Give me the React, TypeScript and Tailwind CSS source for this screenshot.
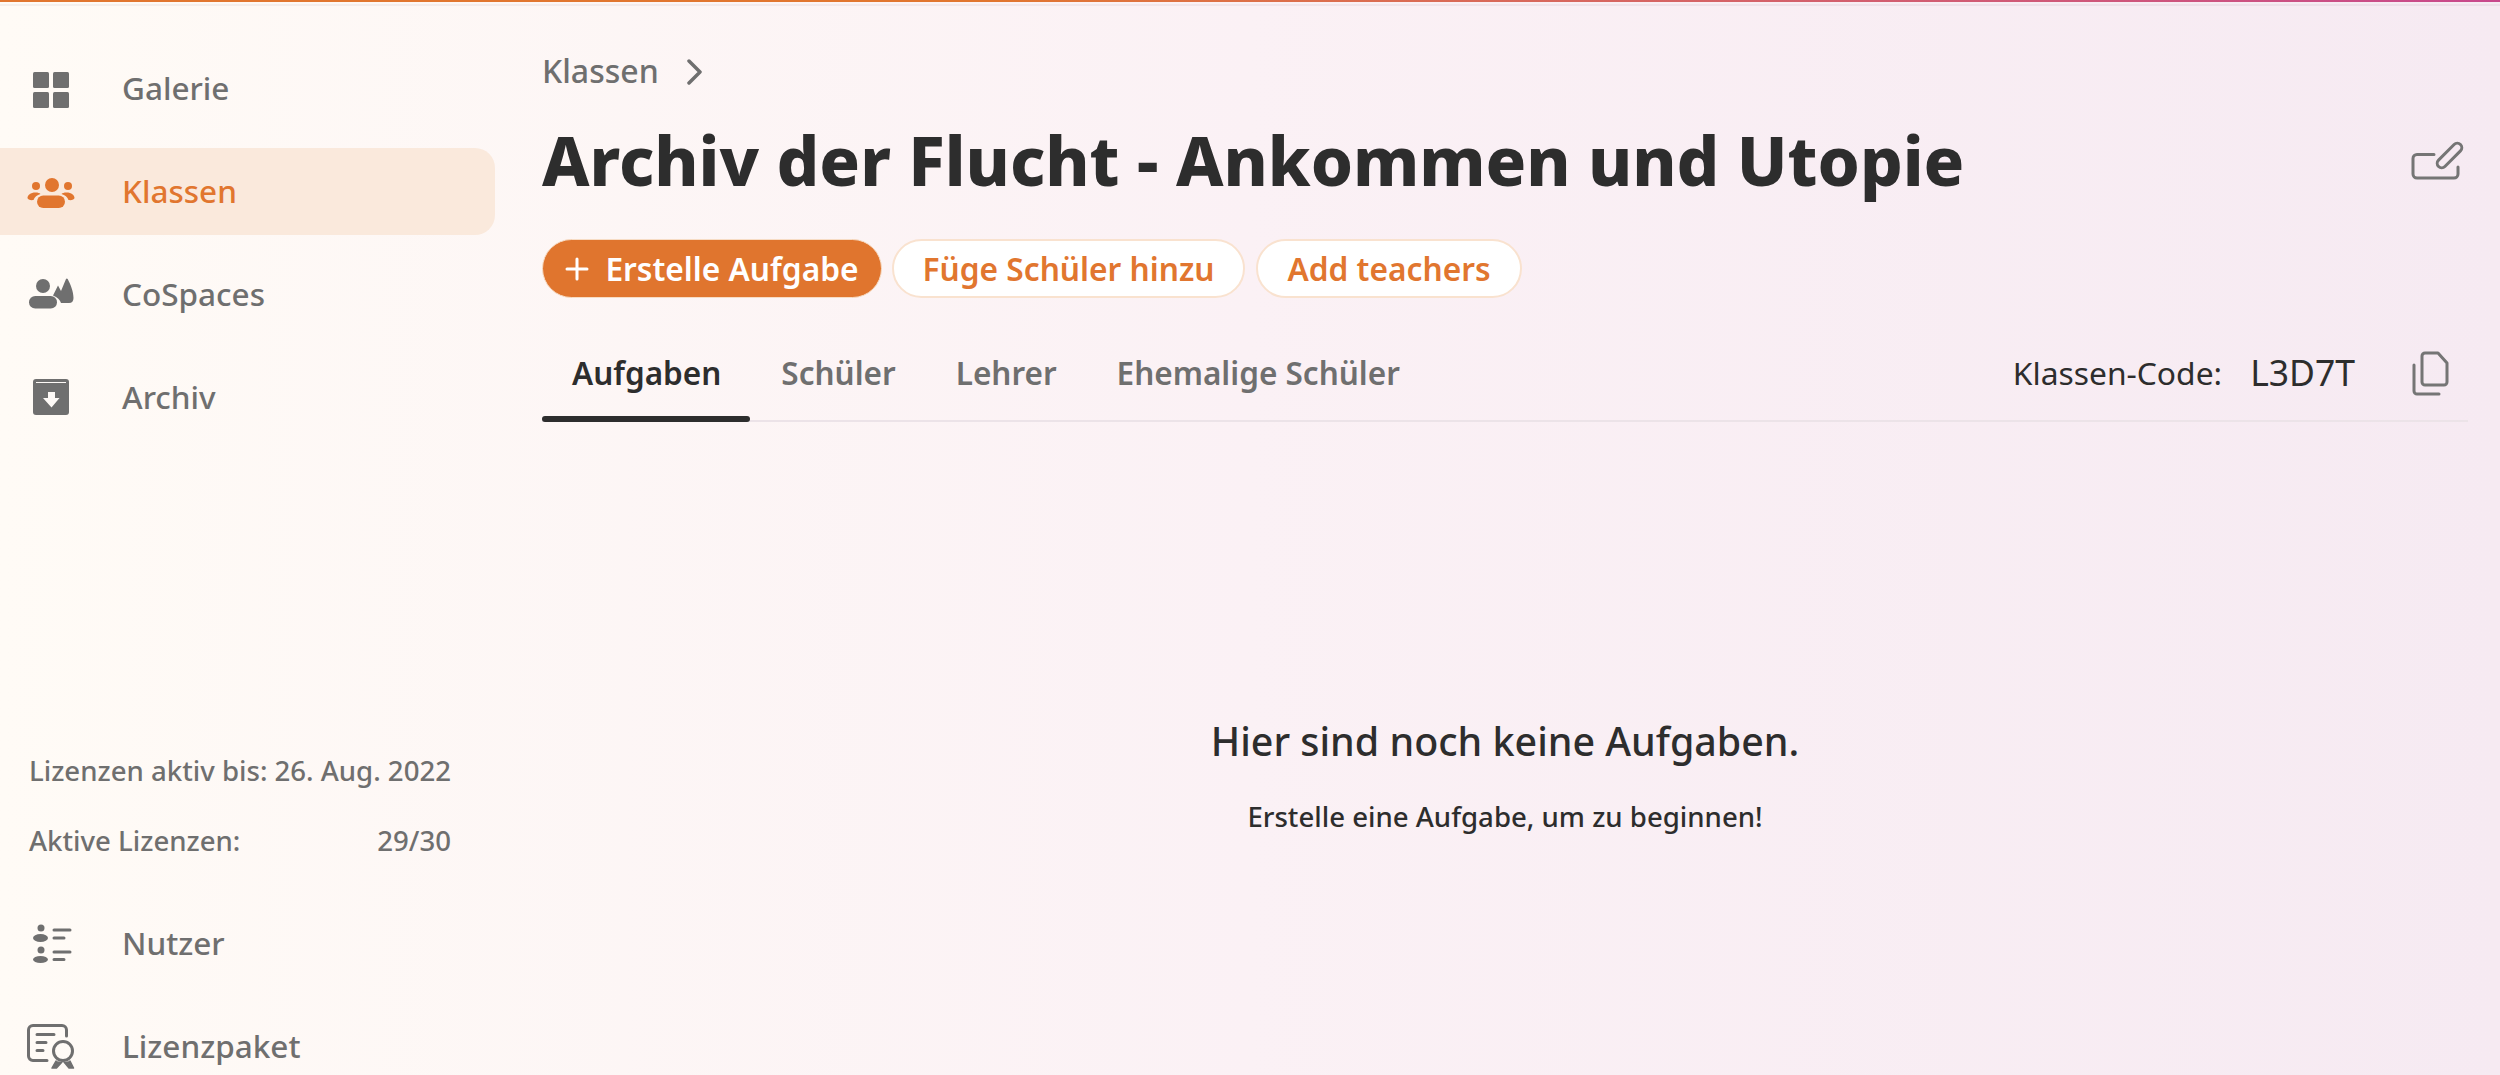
import React from "react";

const Grid = () => (
  <svg viewBox="0 0 48 48" className="w-12 h-12" fill="currentColor">
    <rect x="6" y="7" width="16" height="16" rx="1.5" />
    <rect x="26" y="7" width="16" height="16" rx="1.5" />
    <rect x="6" y="27" width="16" height="16" rx="1.5" />
    <rect x="26" y="27" width="16" height="16" rx="1.5" />
  </svg>
);
const Group = () => (
  <svg viewBox="0 0 48 48" className="w-12 h-12" fill="currentColor">
    <circle cx="25" cy="17" r="7" />
    <circle cx="9" cy="18" r="4" />
    <circle cx="41" cy="18" r="4" />
    <rect x="10" y="27.5" width="28" height="12.5" rx="6.25" />
    <path d="M0.5 30c0-3 3-5.500 8-5.500 2.500 0 4 .5 5 1.500-3.500 1-6 3-7 6-3 .5-6-.5-6-2z" />
    <path d="M47.500 30c0-3-3-5.500-8-5.500-2.500 0-4 .5-5 1.500 3.500 1 6 3 7 6 3 .5 6-.5 6-2z" />
  </svg>
);
const CoSpaces = () => (
  <svg viewBox="0 0 48 48" className="w-12 h-12" fill="currentColor">
    <circle cx="16" cy="15" r="7" />
    <rect x="2" y="25" width="28" height="12.500" rx="6.250" />
    <path d="M26 24.500l5-10 3 5.500L39 8c.5-.8 1.200-.8 1.700 0 2.500 5 5.800 12 5.800 19 0 3-1.500 5-4.500 5h-8c-1-3-3.500-6-8-7.500z" />
  </svg>
);
const Archive = () => (
  <svg viewBox="0 0 48 48" className="w-12 h-12">
    <rect x="6" y="5" width="36" height="36" rx="3" fill="currentColor" />
    <path d="M9 8.500h30" stroke="#fdf9f6" strokeWidth="1" />
    <path d="M21 18h7v6h4.500L24.500 33.500 16 24h5z" fill="#fdf9f6" />
  </svg>
);
const Users = () => (
  <svg viewBox="0 0 48 48" className="w-12 h-12" fill="currentColor">
    <circle cx="14" cy="8" r="3.500" />
    <ellipse cx="13.500" cy="18" rx="7.500" ry="4" />
    <circle cx="14" cy="30" r="3.500" />
    <ellipse cx="13.500" cy="39.500" rx="7.500" ry="3.500" />
    <g stroke="currentColor" strokeWidth="3" strokeLinecap="round">
      <path d="M27 10h16M27 18h10M27 32h16M27 39.500h10" />
    </g>
  </svg>
);
const License = () => (
  <svg viewBox="0 0 48 48" className="w-12 h-12" fill="none" stroke="currentColor" strokeWidth="3" strokeLinecap="round" strokeLinejoin="round">
    <path d="M20 37.500H6a4.500 4.500 0 0 1-4.500-4.500V7A4.500 4.500 0 0 1 6 2.500h29A4.500 4.500 0 0 1 39.500 7v6" />
    <path d="M10 11.500h17M10 19.500h9M10 27.500h6" />
    <circle cx="36" cy="28" r="9.500" />
    <path d="M29 38l-4 7h4.500l5.500-6M43 38l3.500 7H42l-5-6" fill="currentColor" strokeWidth="1.500" />
  </svg>
);

const NavItem = ({ icon, label, active, className = "" }: { icon: React.ReactNode; label: string; active?: boolean; className?: string }) => (
  <div
    className={`flex h-[87px] w-[495px] shrink-0 items-center gap-[47px] rounded-r-[20px] pl-[27px] text-[31.5px] font-medium ${
      active ? "bg-[#fae9dc] text-[#e1762f]" : "text-[#6f6f6f]"
    } ${className}`}
  >
    {icon}
    <span className="pb-[2px]">{label}</span>
  </div>
);

const Sidebar = () => (
  <aside className="flex w-[542px] shrink-0 flex-col pt-[43px]">
    <NavItem icon={<Grid />} label="Galerie" className="mb-4" />
    <NavItem icon={<Group />} label="Klassen" active className="mb-4" />
    <NavItem icon={<CoSpaces />} label="CoSpaces" className="mb-4" />
    <NavItem icon={<Archive />} label="Archiv" />
    <div className="mt-[309px] flex w-[451px] shrink-0 flex-col gap-[30px] pl-[29px] text-[27.6px] font-medium leading-[40px] text-[#6f6f6f]">
      <div className="flex justify-between whitespace-nowrap"><span>Lizenzen aktiv bis:</span><span>26. Aug. 2022</span></div>
      <div className="flex justify-between whitespace-nowrap"><span>Aktive Lizenzen:</span><span>29/30</span></div>
    </div>
    <NavItem icon={<Users />} label="Nutzer" className="mt-[40px] mb-4" />
    <NavItem icon={<License />} label="Lizenzpaket" />
  </aside>
);

const Main = () => (
  <main className="flex min-w-0 flex-1 flex-col pr-[32px]">
    <div className="mt-[47px] flex h-[44px] items-center gap-[27px] text-[32px] font-medium text-[#6f6f6f]">
      <span>Klassen</span>
      <svg viewBox="0 0 18 26" className="mt-[1px] h-[26px] w-[18px]" fill="none" stroke="currentColor" strokeWidth="3.500" strokeLinecap="round" strokeLinejoin="round">
        <path d="M3 2l11 11L3 24" />
      </svg>
    </div>
    <div className="mt-[21px] flex h-[92px] items-center justify-between">
      <h1 className="whitespace-nowrap text-[67.2px] font-extrabold leading-[92px] text-[#2d2d2d]">Archiv der Flucht - Ankommen und Utopie</h1>
      <svg viewBox="0 0 56 41" className="mr-[3px] h-[41px] w-[56px]" fill="none" stroke="#757575" strokeWidth="3" strokeLinecap="round" strokeLinejoin="round">
        <path d="M25 14.500H8a4 4 0 0 0-4 4V34a4 4 0 0 0 4 4h37a4 4 0 0 0 4-4v-7" />
        <rect x="25" y="11" width="31" height="9" rx="4.500" transform="rotate(-45 40.500 15.500)" />
      </svg>
    </div>
    <div className="mt-[33px] flex h-[59px] items-center text-[31.7px] font-semibold">
      <button className="flex h-[59px] w-[340px] items-center justify-center gap-[16px] rounded-full border border-[#f7dcc4] bg-[#e0752e] text-white">
        <svg viewBox="0 0 24 24" className="h-[24px] w-[24px]" fill="none" stroke="currentColor" strokeWidth="3" strokeLinecap="round"><path d="M12 2v20M2 12h20" /></svg>
        Erstelle Aufgabe
      </button>
      <button className="ml-[10px] flex h-[59px] w-[353px] items-center justify-center rounded-full border-2 border-[#f9e2cf] bg-white text-[#e1762f]">Füge Schüler hinzu</button>
      <button className="ml-[11px] flex h-[59px] w-[266px] items-center justify-center rounded-full border-2 border-[#f9e2cf] bg-white text-[#e1762f]">Add teachers</button>
    </div>
    <div className="relative mt-[40px] flex h-[84px] items-center border-b-[2px] border-[#ece3e8] pb-[12px] text-[31.5px] font-semibold text-[#6f6f6f]">
      <div className="px-[30px] text-[#2d2d2d]">Aufgaben</div>
      <span className="absolute -bottom-[2px] left-0 h-[6px] w-[208px] rounded-full bg-[#2d2d2d]" />
      <div className="px-[30px]">Schüler</div>
      <div className="px-[30px]">Lehrer</div>
      <div className="px-[30px]">Ehemalige Schüler</div>
      <div className="ml-auto flex items-center font-normal text-[#2d2d2d]">
        <span className="text-[31.8px]">Klassen-Code:</span>
        <span className="ml-[28px] text-[35.5px]">L3D7T</span>
        <svg viewBox="0 0 38 45" className="ml-[56px] mr-[19px] h-[45px] w-[38px]" fill="none" stroke="#757575" strokeWidth="3" strokeLinejoin="round" strokeLinecap="round">
          <path d="M11 5a3 3 0 0 1 3-3h13l9 10v19a3 3 0 0 1-3 3H14a3 3 0 0 1-3-3z" />
          <path d="M3 14v26a3 3 0 0 0 3 3h22" />
        </svg>
      </div>
    </div>
    <div className="mt-[293px] flex flex-col items-center text-[#2d2d2d]">
      <h2 className="text-[39.4px] font-medium leading-[52px]">Hier sind noch keine Aufgaben.</h2>
      <p className="mt-[31px] text-[27.6px] font-medium leading-[36px]">Erstelle eine Aufgabe, um zu beginnen!</p>
    </div>
  </main>
);

export default function App() {
  return (
    <div className="flex h-[1075px] w-[2500px] flex-col overflow-hidden bg-gradient-to-r from-[#fffbf6] via-[#fbf1f5] via-50% to-[#f6eaf2] font-['Noto_Sans',sans-serif]">
      <div className="relative h-[2px] shrink-0 bg-gradient-to-r from-[#e1762f] via-[#e1762f] via-40% to-[#c8488c] shadow-[0_4px_0_rgba(60,40,60,0.05)]" />
      <div className="flex min-h-0 flex-1">
        <Sidebar />
        <Main />
      </div>
    </div>
  );
}
